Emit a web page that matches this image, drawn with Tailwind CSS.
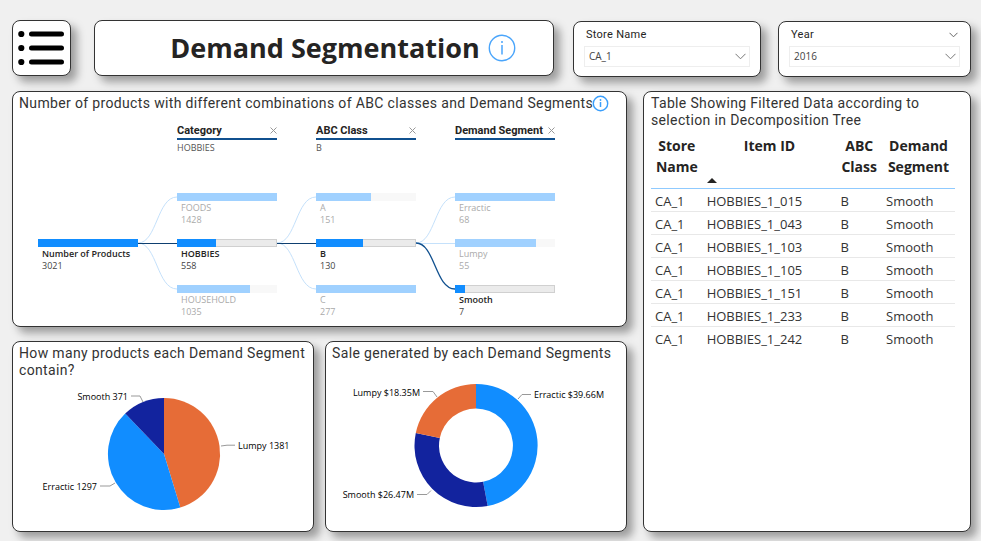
<!DOCTYPE html>
<html lang="en">
<head>
<meta charset="utf-8">
<meta name="viewport" content="width=device-width, initial-scale=1">
<title>Demand Segmentation</title>
<script src="https://cdn.jsdelivr.net/npm/@tailwindcss/browser@4"></script>
</head>
<body class="flex min-h-screen flex-col bg-[#f0f0f0] pt-5 pr-[10px] pb-[9px] pl-3 font-['Open_Sans',sans-serif] text-[#252423]">

<header class="flex h-[57px] items-start">
  <button type="button" aria-label="Menu" class="flex h-[56px] w-[59px] shrink-0 items-center justify-center rounded-[8px] border border-[#333] bg-white pr-[2px] shadow-[6px_6px_9px_rgba(0,0,0,0.35)]">
    <svg width="46" height="36" viewBox="0 0 46 36" fill="#000" stroke="#000" aria-hidden="true">
      <g stroke="none"><circle cx="3.3" cy="4" r="3.1"/><circle cx="3.3" cy="18" r="3.1"/><circle cx="3.3" cy="32" r="3.1"/></g>
      <path d="M13.5 4h30M13.5 18h30M13.5 32h30" stroke-width="5" stroke-linecap="round"/>
    </svg>
  </button>
  <div class="ml-[23px] flex h-[56px] flex-1 items-center justify-center gap-2 rounded-[8px] border border-[#333] bg-white pl-[38px] shadow-[6px_6px_9px_rgba(0,0,0,0.35)]">
    <h1 class="text-[27px] leading-9 font-bold whitespace-nowrap">Demand Segmentation</h1>
    <svg class="shrink-0" width="28" height="28" viewBox="0 0 28 28" fill="none" stroke="#4aa5fb" aria-hidden="true">
      <circle cx="14" cy="14" r="12.7" stroke-width="1.4"/><path d="M14 11v9.5" stroke-width="1.5"/><circle cx="14" cy="8" r="1" fill="#4aa5fb" stroke="none"/>
    </svg>
  </div>
  <div class="mt-px ml-[19px] flex h-[56px] w-[188px] flex-col rounded-[8px] border border-[#333] bg-white px-[10px] pt-[5px] shadow-[6px_6px_9px_rgba(0,0,0,0.35)]">
    <label for="store" class="pl-[2px] font-[Roboto,sans-serif] text-[11px] leading-4 tracking-wide">Store Name</label>
    <div class="relative mt-[3px] flex">
      <select id="store" class="h-[21px] w-full appearance-none border border-[#eee] bg-white pl-1 text-[10px] text-[#444]"><option>CA_1</option></select>
      <svg class="pointer-events-none absolute top-[7px] right-1" width="11" height="7" viewBox="0 0 11 7" fill="none" stroke="#777" aria-hidden="true"><path d="M.5.8l5 5 5-5"/></svg>
    </div>
  </div>
  <div class="mt-px ml-[17px] flex h-[56px] w-[193px] flex-col rounded-[8px] border border-[#333] bg-white px-[10px] pt-[5px] shadow-[6px_6px_9px_rgba(0,0,0,0.35)]">
    <div class="flex items-center justify-between pr-[2px] pl-[2px]">
      <label for="year" class="font-[Roboto,sans-serif] text-[11px] leading-4 tracking-wide">Year</label>
      <button type="button" aria-label="Collapse filter"><svg width="9" height="6" viewBox="0 0 9 6" fill="none" stroke="#666" aria-hidden="true"><path d="M.5.8l4 4 4-4"/></svg></button>
    </div>
    <div class="relative mt-[3px] flex">
      <select id="year" class="h-[21px] w-full appearance-none border border-[#eee] bg-white pl-1 text-[10px] text-[#444]"><option>2016</option></select>
      <svg class="pointer-events-none absolute top-[7px] right-1" width="11" height="7" viewBox="0 0 11 7" fill="none" stroke="#777" aria-hidden="true"><path d="M.5.8l5 5 5-5"/></svg>
    </div>
  </div>
</header>

<main class="mt-[14px] grid flex-1 grid-cols-[615fr_328fr] gap-4">
  <div class="flex min-w-0 flex-col gap-[14px]">

    <section class="h-[236px] rounded-[8px] border border-[#333] bg-white px-[6px] pt-[3px] shadow-[6px_6px_9px_rgba(0,0,0,0.35)]">
      <div class="flex items-center">
        <h2 class="font-[Roboto,sans-serif] text-[14px] leading-[17px] tracking-wide whitespace-nowrap text-[#333]">Number of products with different combinations of ABC classes and Demand Segments</h2>
        <svg class="-ml-px shrink-0" width="17" height="17" viewBox="0 0 17 17" fill="none" stroke="#3a9efb" aria-hidden="true"><circle cx="8.5" cy="8.5" r="7.2" stroke-width="1.4"/><path d="M8.5 7v5" stroke-width="1.5"/><circle cx="8.5" cy="5" r=".9" fill="#3a9efb" stroke="none"/></svg>
      </div>

      <div class="ml-[19px] grid grid-cols-[100px_100px_100px_100px] gap-x-[39px] pt-[11px] text-[9px]">
        <div class="col-start-2">
          <div class="flex items-center justify-between border-b-2 border-[#10508f] leading-[15px]"><span class="font-[Roboto,sans-serif] text-[11px] font-bold">Category</span><button type="button" aria-label="Remove Category"><svg width="7" height="7" viewBox="0 0 7 7" stroke="#999" aria-hidden="true"><path d="M.5.5l6 6M6.500.5l-6 6"/></svg></button></div>
          <div class="pt-[2px] leading-[11px] text-[#555]">HOBBIES</div>
        </div>
        <div>
          <div class="flex items-center justify-between border-b-2 border-[#10508f] leading-[15px]"><span class="font-[Roboto,sans-serif] text-[11px] font-bold">ABC Class</span><button type="button" aria-label="Remove ABC Class"><svg width="7" height="7" viewBox="0 0 7 7" stroke="#999" aria-hidden="true"><path d="M.5.5l6 6M6.500.5l-6 6"/></svg></button></div>
          <div class="pt-[2px] leading-[11px] text-[#555]">B</div>
        </div>
        <div>
          <div class="flex items-center justify-between border-b-2 border-[#10508f] leading-[15px]"><span class="font-[Roboto,sans-serif] text-[11px] font-bold whitespace-nowrap">Demand Segment</span><button type="button" aria-label="Remove Demand Segment"><svg width="7" height="7" viewBox="0 0 7 7" stroke="#999" aria-hidden="true"><path d="M.5.5l6 6M6.500.5l-6 6"/></svg></button></div>
        </div>
      </div>

      <div class="mt-10 ml-[19px] flex text-[9px] leading-3">
        <div class="w-[100px] pt-[46px]">
          <div class="h-2 bg-[#118dff]"></div>
          <div class="pt-px pl-1 font-semibold whitespace-nowrap">Number of Products</div><div class="pl-1 text-[#444]">3021</div>
        </div>
        <svg width="39" height="100" viewBox="0 0 39 100" fill="none" stroke="#c5e1fb" aria-hidden="true"><path d="M0 50C19 50 19 4 39 4M0 50C19 50 19 96 39 96"/><path d="M0 50.500H39" stroke="#0e3f70"/></svg>
        <div class="flex w-[100px] flex-col gap-[13px]">
          <div class="text-[#aaa]"><div class="h-2 bg-[#a0d1ff]"></div><div class="pt-px pl-1">FOODS</div><div class="pl-1">1428</div></div>
          <div><div class="h-2 border border-[#d0d0d0] bg-[#ebebeb]"><div class="-m-px h-2 bg-[#118dff]" style="width:39px"></div></div><div class="pt-px pl-1 font-semibold">HOBBIES</div><div class="pl-1 text-[#444]">558</div></div>
          <div class="text-[#aaa]"><div class="h-2 bg-[#f8f8f8]"><div class="h-2 bg-[#a0d1ff]" style="width:72.500%"></div></div><div class="pt-px pl-1">HOUSEHOLD</div><div class="pl-1">1035</div></div>
        </div>
        <svg width="39" height="100" viewBox="0 0 39 100" fill="none" stroke="#c5e1fb" aria-hidden="true"><path d="M0 50C19 50 19 4 39 4M0 50C19 50 19 96 39 96"/><path d="M0 50.500H39" stroke="#0e3f70"/></svg>
        <div class="flex w-[100px] flex-col gap-[13px]">
          <div class="text-[#aaa]"><div class="h-2 bg-[#f8f8f8]"><div class="h-2 bg-[#a0d1ff]" style="width:54.500%"></div></div><div class="pt-px pl-1">A</div><div class="pl-1">151</div></div>
          <div><div class="h-2 border border-[#d0d0d0] bg-[#ebebeb]"><div class="-m-px h-2 bg-[#118dff]" style="width:47px"></div></div><div class="pt-px pl-1 font-semibold">B</div><div class="pl-1 text-[#444]">130</div></div>
          <div class="text-[#aaa]"><div class="h-2 bg-[#a0d1ff]"></div><div class="pt-px pl-1">C</div><div class="pl-1">277</div></div>
        </div>
        <svg width="39" height="100" viewBox="0 0 39 100" fill="none" stroke="#c5e1fb" aria-hidden="true"><path d="M0 50C19 50 19 4 39 4M0 50.500H39"/><path d="M0 50C19 50 19 96 39 96" stroke="#10508f" stroke-width="1.300"/></svg>
        <div class="flex w-[100px] flex-col gap-[13px]">
          <div class="text-[#aaa]"><div class="h-2 bg-[#a0d1ff]"></div><div class="pt-px pl-1">Erractic</div><div class="pl-1">68</div></div>
          <div class="text-[#aaa]"><div class="h-2 bg-[#f8f8f8]"><div class="h-2 bg-[#a0d1ff]" style="width:81%"></div></div><div class="pt-px pl-1">Lumpy</div><div class="pl-1">55</div></div>
          <div><div class="h-2 border border-[#d0d0d0] bg-[#ebebeb]"><div class="-m-px h-2 bg-[#118dff]" style="width:10px"></div></div><div class="pt-px pl-1 font-semibold">Smooth</div><div class="pl-1 text-[#444]">7</div></div>
        </div>
      </div>
    </section>

    <div class="grid flex-1 grid-cols-2 gap-[11px]">
      <section class="flex flex-col rounded-[8px] border border-[#333] bg-white pt-[3px] shadow-[6px_6px_9px_rgba(0,0,0,0.35)]">
        <h2 class="px-[6px] font-[Roboto,sans-serif] text-[14px] leading-[17px] tracking-wide text-[#333]">How many products each Demand Segment contain?</h2>
        <svg class="min-h-0 w-full flex-1" viewBox="0 0 300 152" font-size="9" role="img" aria-label="Products per demand segment">
          <g transform="translate(151 75)">
            <path fill="#e66c37" d="M0 0V-56A56 56 0 0 1 16.300 53.600Z"/>
            <path fill="#118dff" d="M0 0L16.300 53.600A56 56 0 0 1 -38.800 -40.400Z"/>
            <path fill="#12239e" d="M0 0L-38.800 -40.400A56 56 0 0 1 0 -56Z"/>
          </g>
          <path d="M118 17h9l3 6M208 67l6-.8h8M87 107h10l5-3" fill="none" stroke="#999"/>
          <text x="115" y="21" text-anchor="end">Smooth 371</text>
          <text x="225" y="70">Lumpy 1381</text>
          <text x="84" y="111" text-anchor="end">Erractic 1297</text>
        </svg>
      </section>
      <section class="flex flex-col rounded-[8px] border border-[#333] bg-white pt-[3px] shadow-[6px_6px_9px_rgba(0,0,0,0.35)]">
        <h2 class="px-[6px] font-[Roboto,sans-serif] text-[14px] leading-[17px] tracking-wide text-[#333]">Sale generated by each Demand Segments</h2>
        <svg class="min-h-0 w-full flex-1" viewBox="0 0 300 169" font-size="9" role="img" aria-label="Sales per demand segment">
          <g transform="translate(150 83.500)">
            <path fill="#118dff" d="M0 -61.500A61.500 61.500 0 0 1 11.700 60.400L7.100 36.300A37 37 0 0 0 0 -37Z"/>
            <path fill="#12239e" d="M11.700 60.400A61.500 61.500 0 0 1 -60.200 -12.600L-36.200 -7.600A37 37 0 0 0 7.100 36.300Z"/>
            <path fill="#e66c37" d="M-60.200 -12.600A61.500 61.500 0 0 1 0 -61.500V-37A37 37 0 0 0 -36.200 -7.600Z"/>
          </g>
          <path d="M97 29.500h10l4 5.500M192 37l4-4.500h9M91 132.500h10l4-4" fill="none" stroke="#999"/>
          <text x="94" y="34" text-anchor="end">Lumpy $18.35M</text>
          <text x="208" y="36">Erractic $39.66M</text>
          <text x="88" y="136" text-anchor="end">Smooth $26.47M</text>
        </svg>
      </section>
    </div>
  </div>

  <section class="min-w-0 rounded-[8px] border border-[#333] bg-white pt-[3px] pr-[15px] pl-[7px] shadow-[6px_6px_9px_rgba(0,0,0,0.35)]">
    <h2 class="font-[Roboto,sans-serif] text-[14px] leading-[17px] tracking-wide text-[#333]">Table Showing Filtered Data according to selection in Decomposition Tree</h2>
    <table class="mt-[6px] w-full table-fixed border-collapse text-[13px]">
      <colgroup><col class="w-[17%]"><col class="w-[44%]"><col class="w-[15%]"><col class="w-[24%]"></colgroup>
      <thead class="text-[14px] leading-[21px] font-bold">
        <tr class="h-[53px] align-top [&>th]:border-b [&>th]:border-[#8fcaff]">
          <th scope="col">Store Name</th>
          <th scope="col" aria-sort="ascending">Item ID<svg class="mt-[22px] ml-1" width="10" height="5" viewBox="0 0 10 5" fill="#252423" aria-hidden="true"><path d="M0 5l5-5 5 5z"/></svg></th>
          <th scope="col">ABC Class</th>
          <th scope="col">Demand Segment</th>
        </tr>
      </thead>
      <tbody class="text-[#333] [&_td]:border-[#e8e8e8] [&_td]:pt-[2px] [&_td]:pl-1 [&_td]:leading-5 [&>tr:not(:last-child)>td]:border-b">
        <tr><td>CA_1</td><td>HOBBIES_1_015</td><td>B</td><td>Smooth</td></tr>
        <tr><td>CA_1</td><td>HOBBIES_1_043</td><td>B</td><td>Smooth</td></tr>
        <tr><td>CA_1</td><td>HOBBIES_1_103</td><td>B</td><td>Smooth</td></tr>
        <tr><td>CA_1</td><td>HOBBIES_1_105</td><td>B</td><td>Smooth</td></tr>
        <tr><td>CA_1</td><td>HOBBIES_1_151</td><td>B</td><td>Smooth</td></tr>
        <tr><td>CA_1</td><td>HOBBIES_1_233</td><td>B</td><td>Smooth</td></tr>
        <tr><td>CA_1</td><td>HOBBIES_1_242</td><td>B</td><td>Smooth</td></tr>
      </tbody>
    </table>
  </section>
</main>
</body>
</html>
